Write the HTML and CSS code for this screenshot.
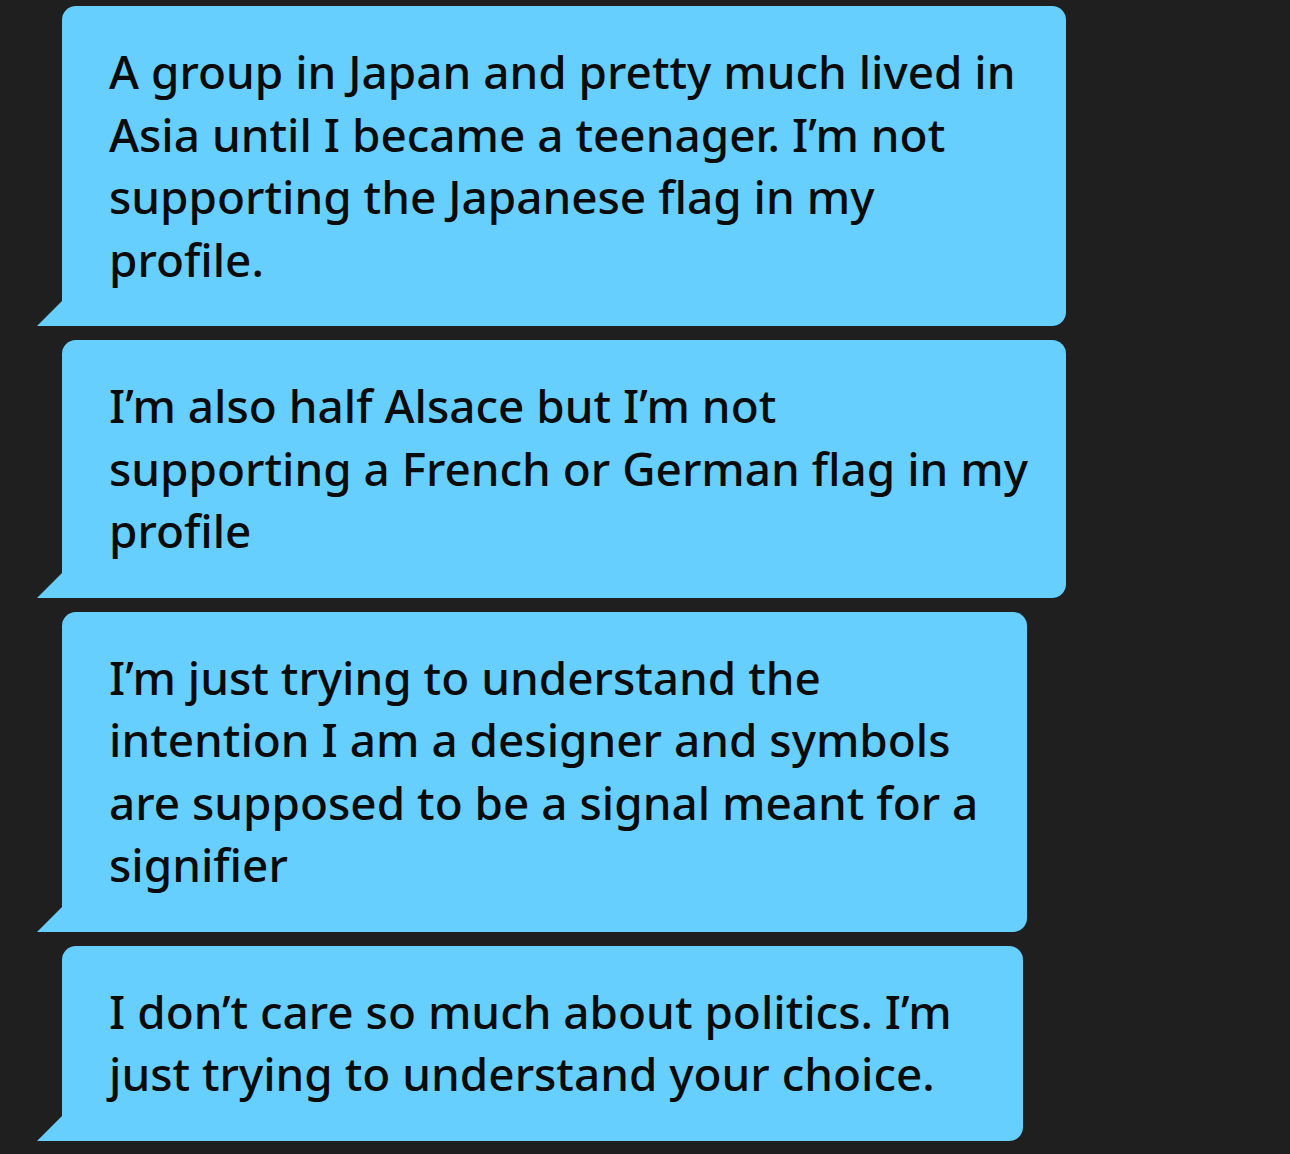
FILE: index.html
```html
<!DOCTYPE html>
<html lang="en">
<head>
<meta charset="utf-8">
<title>Messages</title>
<link rel="stylesheet" href="styles.css">
</head>
<body>
<main class="thread">
  <div class="bubble bubble-wide">A group in Japan and pretty much lived in<br>Asia until I became a teenager. I’m not<br>supporting the Japanese flag in my<br>profile.</div>
  <div class="bubble bubble-wide">I’m also half Alsace but I’m not<br>supporting a French or German flag in my<br>profile</div>
  <div class="bubble bubble-mid">I’m just trying to understand the<br>intention I am a designer and symbols<br>are supposed to be a signal meant for a<br>signifier</div>
  <div class="bubble bubble-narrow">I don’t care so much about politics. I’m<br>just trying to understand your choice.</div>
</main>
</body>
</html>
```
FILE: styles.css
```css
html, body {
  margin: 0;
  padding: 0;
  background: #1f1f1f;
}
body {
  width: 1290px;
  height: 1154px;
  overflow: hidden;
}
.thread {
  display: flex;
  flex-direction: column;
  align-items: flex-start;
  gap: 14px;
  padding: 6px 0 0 62px;
}
.bubble {
  position: relative;
  box-sizing: border-box;
  padding: 34px 0 36px 47px;
  background: #66cffd;
  color: #0b0b0b;
  border-radius: 14px 14px 14px 0;
  font-family: "Noto Sans", "Open Sans", sans-serif;
  font-weight: 500;
  font-size: 45.9px;
  line-height: 62.5px;
  white-space: nowrap;
}
.bubble-wide { width: 1004px; }
.bubble-mid { width: 965px; }
.bubble-narrow { width: 961px; }
.bubble::before {
  content: "";
  position: absolute;
  left: -25px;
  bottom: 0;
  width: 0;
  height: 0;
  border-left: 25px solid transparent;
  border-bottom: 25px solid #66cffd;
}
```
